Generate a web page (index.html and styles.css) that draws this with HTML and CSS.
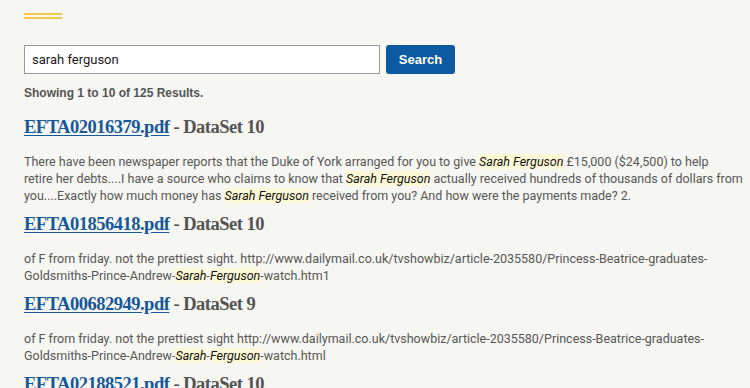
FILE: index.html
```html
<!DOCTYPE html>
<html lang="en">
<head>
    <meta charset="UTF-8">
    <meta name="viewport" content="width=device-width, initial-scale=1.0">
    <title>Search Results</title>
    <link rel="stylesheet" href="styles.css">
</head>
<body>
    <div class="page">
        <div class="rule"></div>
        <form class="search-form">
            <input type="text" class="search-input" value="sarah ferguson">
            <button type="button" class="search-button">Search</button>
        </form>
        <p class="summary">Showing 1 to 10 of 125 Results.</p>

        <div class="result">
            <h2 class="result-title"><a href="#">EFTA02016379.pdf</a> - DataSet 10</h2>
            <p class="snippet">There have been newspaper reports that the Duke of York arranged for you to give <mark>Sarah Ferguson</mark> £15,000 ($24,500) to help<br>retire her debts....I have a source who claims to know that <mark>Sarah Ferguson</mark> actually received hundreds of thousands of dollars from you....Exactly how much money has <mark>Sarah Ferguson</mark> received from you? And how were the payments made? 2.</p>
        </div>
        <div class="result">
            <h2 class="result-title"><a href="#">EFTA01856418.pdf</a> - DataSet 10</h2>
            <p class="snippet">of F from friday. not the prettiest sight. http://www.dailymail.co.uk/tvshowbiz/article-2035580/Princess-Beatrice-graduates-Goldsmiths-Prince-Andrew-<mark>Sarah</mark>-<mark>Ferguson</mark>-watch.htm1</p>
        </div>
        <div class="result">
            <h2 class="result-title"><a href="#">EFTA00682949.pdf</a> - DataSet 9</h2>
            <p class="snippet">of F from friday. not the prettiest sight http://www.dailymail.co.uk/tvshowbiz/article-2035580/Princess-Beatrice-graduates-Goldsmiths-Prince-Andrew-<mark>Sarah</mark>-<mark>Ferguson</mark>-watch.html</p>
        </div>
        <div class="result">
            <h2 class="result-title"><a href="#">EFTA02188521.pdf</a> - DataSet 10</h2>
        </div>
    </div>
</body>
</html>
```

FILE: styles.css
```css
:root {
    --background-color: #F6F6F2;
    --text-color: #565656;
    --link-color: #17589A;
    --button-color: #0B5AA2;
    --accent-yellow: #F4C84E;
    --highlight: #FDF9D6;
}
body {
    margin: 0;
    font-family: Roboto, 'Liberation Sans', Arial, sans-serif;
    background-color: var(--background-color);
    color: var(--text-color);
}
.page {
    padding: 13px 5px 0 24px;
}
.rule {
    width: 38px;
    height: 2px;
    border-top: 2px solid var(--accent-yellow);
    border-bottom: 2px solid var(--accent-yellow);
}
.search-form {
    display: flex;
    gap: 6px;
    margin-top: 26px;
}
.search-input {
    width: 356px;
    height: 29px;
    box-sizing: border-box;
    padding: 0 7px;
    border: 1px solid #9A9A9A;
    border-radius: 0;
    background-color: #FFFFFF;
    font-family: Roboto, Arial, sans-serif;
    font-size: 13px;
    color: #1B1B1B;
}
.search-button {
    width: 69px;
    height: 29px;
    border: none;
    border-radius: 3px;
    background-color: var(--button-color);
    color: #FFFFFF;
    font-family: 'Liberation Sans', Arial, sans-serif;
    font-size: 13px;
    font-weight: 700;
    cursor: pointer;
}
.summary {
    margin: 11px 0 0;
    font-family: 'Liberation Sans', Arial, sans-serif;
    font-size: 12px;
    line-height: 17px;
    font-weight: 700;
    color: #555555;
}
.result {
    margin-top: 13px;
}
.result + .result {
    margin-top: 8px;
}
.result-title {
    margin: 0;
    font-family: 'Liberation Serif', 'Times New Roman', serif;
    font-size: 18.5px;
    line-height: 24px;
    font-weight: 700;
    letter-spacing: -0.5px;
    color: #545454;
}
.result-title a {
    color: var(--link-color);
    text-decoration: underline;
    text-underline-offset: 2px;
}
.snippet {
    margin: 14px 0 0;
    font-size: 12.5px;
    line-height: 17px;
    color: var(--text-color);
}
mark {
    background-color: var(--highlight);
    color: #111111;
    font-style: italic;
}
```
